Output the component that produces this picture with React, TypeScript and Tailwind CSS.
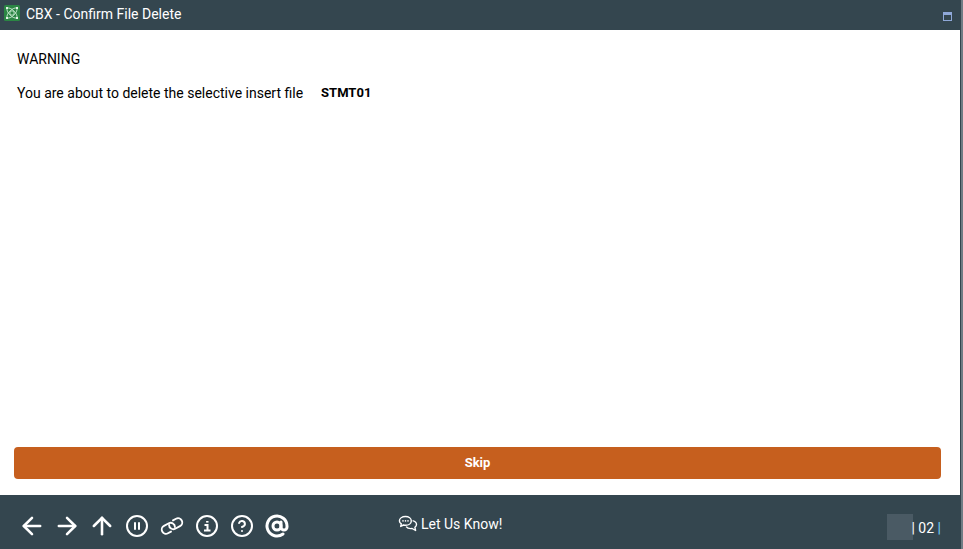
import { ArrowLeft, ArrowRight, ArrowUp, AtSign, CircleHelp, CirclePause } from "lucide-react";

function InfoIcon() {
  return (
    <svg width="24" height="24" viewBox="0 0 24 24" fill="none" stroke="currentColor" strokeWidth="2">
      <circle cx="12" cy="12" r="10" />
      <path d="M9.5 11h3v5.5M9 16.5h6.5" />
      <path d="M12.3 7v1.6" strokeWidth="2.4" />
    </svg>
  );
}

function ChainIcon() {
  return (
    <svg width="24" height="24" viewBox="0 0 24 24" fill="none" stroke="currentColor" strokeWidth="1.9" strokeLinecap="round">
      <g transform="rotate(-28 12 12)">
        <path d="M8.5 16.5H5a4.2 4.2 0 0 1 0-8.4h5.5a4.2 4.2 0 0 1 3.6 6.2" />
        <path d="M15.5 7.5H19a4.2 4.2 0 0 1 0 8.4h-5.5a4.2 4.2 0 0 1-3.6-6.2" />
      </g>
    </svg>
  );
}

function ChatIcon() {
  return (
    <svg width="20" height="18" viewBox="0 0 20 18" fill="none" stroke="currentColor" strokeWidth="1.4" strokeLinejoin="round">
      <path d="M7.5 1.5c3.3 0 5.8 1.9 5.8 4.4s-2.5 4.4-5.8 4.4c-.7 0-1.4-.1-2-.3L2.7 11.4l.6-2.6C2.1 8 1.4 7 1.4 5.9c0-2.5 2.7-4.4 6.1-4.4z" />
      <path d="M14.6 5.6c2.3.5 3.9 2 3.9 3.9 0 1.1-.6 2.1-1.6 2.8l.7 3.2-3.5-2c-.5.1-1 .1-1.4.1-2 0-3.7-.8-4.6-2" />
      <path d="M5 5.9h.01M7.5 5.9h.01M10 5.9h.01" strokeWidth="1.6" strokeLinecap="round" />
    </svg>
  );
}

const tools = [
  { name: "back", icon: <ArrowLeft size={28} strokeWidth={2.2} /> },
  { name: "next", icon: <ArrowRight size={28} strokeWidth={2.2} /> },
  { name: "up", icon: <ArrowUp size={28} strokeWidth={2.2} /> },
  { name: "pause", icon: <CirclePause size={24} strokeWidth={2} /> },
  { name: "link", icon: <ChainIcon /> },
  { name: "info", icon: <InfoIcon /> },
  { name: "help", icon: <CircleHelp size={24} strokeWidth={2} /> },
  { name: "mail", icon: <AtSign size={24} strokeWidth={3} /> },
];

export default function App() {
  return (
    <div className="flex h-[549px] w-[963px] flex-col overflow-hidden border-r-2 border-[#6f7c84] bg-[#34464f] font-['Roboto',sans-serif] text-white">
      {/* Title bar */}
      <header className="flex h-[30px] items-center pl-1 pr-[9px]">
        <svg width="16" height="16" viewBox="0 0 16 16" className="mb-[4px] shrink-0">
          <rect width="16" height="16" rx="1.5" fill="#2b8644" />
          <g fill="none" stroke="#bfe3c8" strokeWidth="0.9">
            <ellipse cx="8" cy="8" rx="6.5" ry="2.8" transform="rotate(45 8 8)" />
            <ellipse cx="8" cy="8" rx="6.5" ry="2.8" transform="rotate(-45 8 8)" />
            <circle cx="8" cy="8" r="2.2" />
          </g>
          <path d="M2 2h2v2H2zM12 2h2v2h-2zM2 12h2v2H2zM12 12h2v2h-2z" fill="#e3f3e7" />
        </svg>
        <span className="mb-[2px] ml-[6px] text-sm">CBX - Confirm File Delete</span>
        <div className="mb-[-3px] ml-auto h-[9px] w-[9px] border border-t-[3px] border-[#8fa8d8]" />
      </header>

      {/* Dialog body */}
      <main className="mr-px flex flex-1 flex-col bg-white px-[14px] pb-4 text-black">
        <div className="flex-1 pl-[3px] pt-[21px] text-sm leading-4">
          <p>WARNING</p>
          <p className="mt-[18px] flex">
            You are about to delete the selective insert file
            <strong className="ml-[18px] text-[13px] font-bold">STMT01</strong>
          </p>
        </div>
        <button className="mr-[5px] h-8 rounded bg-[#c65f1e] text-[13px] font-bold text-white">Skip</button>
      </main>

      {/* Toolbar */}
      <footer className="flex h-[54px] items-center pl-[14px] pr-5 pt-2">
        <div className="flex items-center">
          {tools.map((tool) => (
            <div key={tool.name} className="flex w-[35px] justify-center">
              {tool.icon}
            </div>
          ))}
        </div>
        <div className="mb-1 ml-[104px] flex items-center gap-[3px] text-sm">
          <ChatIcon />
          <span>Let Us Know!</span>
        </div>
        <div className="ml-auto mt-[2px] flex items-center text-sm">
          <div className="-mr-[2px] h-[26px] w-[26px] bg-[#4a5a64]" />
          <span className="mt-px">| 02 <span className="text-sky-300">|</span></span>
        </div>
      </footer>
    </div>
  );
}
